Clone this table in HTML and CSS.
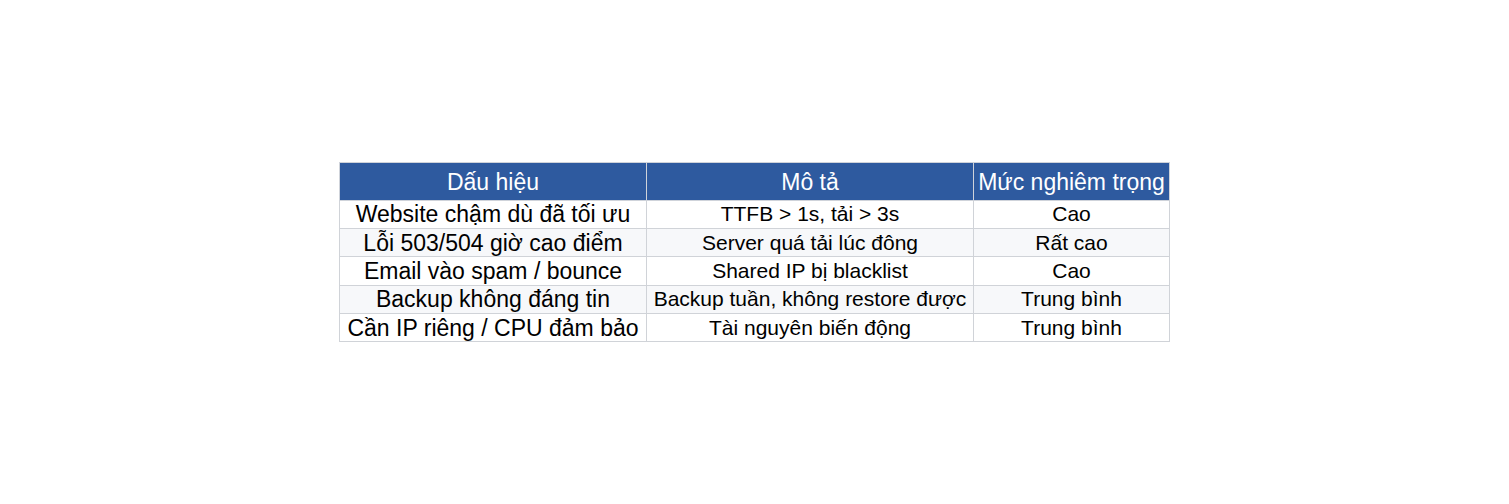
FILE: index.html
```html
<!DOCTYPE html>
<html lang="vi">
<head>
<meta charset="utf-8">
<link rel="stylesheet" href="styles.css">
</head>
<body>
<div class="page">
<table class="signs">
<colgroup><col class="c1"><col class="c2"><col class="c3"></colgroup>
<thead>
<tr><th>Dấu hiệu</th><th>Mô tả</th><th>Mức nghiêm trọng</th></tr>
</thead>
<tbody>
<tr><td class="sign">Website chậm dù đã tối ưu</td><td>TTFB &gt; 1s, tải &gt; 3s</td><td>Cao</td></tr>
<tr><td class="sign">Lỗi 503/504 giờ cao điểm</td><td>Server quá tải lúc đông</td><td>Rất cao</td></tr>
<tr><td class="sign">Email vào spam / bounce</td><td>Shared IP bị blacklist</td><td>Cao</td></tr>
<tr><td class="sign">Backup không đáng tin</td><td>Backup tuần, không restore được</td><td>Trung bình</td></tr>
<tr><td class="sign">Cần IP riêng / CPU đảm bảo</td><td>Tài nguyên biến động</td><td>Trung bình</td></tr>
</tbody>
</table>
</div>
</body>
</html>
```
FILE: styles.css
```css
html, body { margin: 0; padding: 0; background: #ffffff; }
.page {
  height: 504px;
  display: flex;
  align-items: center;
  justify-content: center;
  font-family: "Liberation Sans", Arial, sans-serif;
}
.signs {
  border-collapse: collapse;
  table-layout: fixed;
  width: 831px;
  color: #000;
}
.c1 { width: 307px; }
.c2 { width: 327px; }
.c3 { width: 196px; }
.signs th {
  background: #2e5a9f;
  color: #ffffff;
  font-weight: normal;
  font-size: 23px;
  line-height: 26px;
  height: 38px;
  padding: 2px 0 0;
  box-sizing: border-box;
  border: 1px solid #cfd3da;
  text-align: center;
  vertical-align: middle;
  white-space: nowrap;
}
.signs td {
  font-size: 21px;
  line-height: 24px;
  height: 28.4px;
  padding: 0;
  box-sizing: border-box;
  border: 1px solid #d0d3d8;
  text-align: center;
  vertical-align: middle;
  white-space: nowrap;
}
.signs td.sign { font-size: 23px; }
.signs tbody tr:nth-child(even) td { background: #f7f8fa; }
```
